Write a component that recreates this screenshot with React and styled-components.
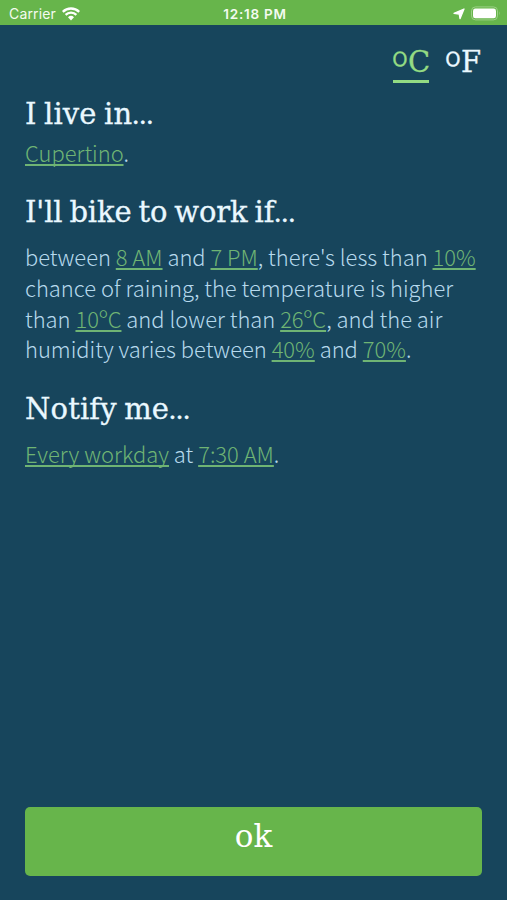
import React from "react";
import styled, { createGlobalStyle } from "styled-components";

const GlobalStyle = createGlobalStyle`
  * {
    box-sizing: border-box;
  }
  body {
    margin: 0;
    background: #17455c;
  }
`;

const Screen = styled.div`
  display: flex;
  flex-direction: column;
  width: 507px;
  height: 900px;
  background: #17455c;
  overflow: hidden;
`;

const StatusBar = styled.header`
  display: grid;
  grid-template-columns: 1fr auto 1fr;
  align-items: center;
  height: 25px;
  padding: 2px 6px 0 9px;
  background: #67b54b;
  color: #f4fbf0;
  font: 400 14px/20px Inter, sans-serif;
  letter-spacing: 0.15px;
`;

const StatusGroup = styled.div`
  display: flex;
  align-items: center;
  justify-content: ${(props) => (props.$end ? "flex-end" : "flex-start")};
  gap: 6px;
`;

const Clock = styled.span`
  font-weight: 600;
  font-size: 13.5px;
  letter-spacing: 0.75px;
`;

const Units = styled.nav`
  display: flex;
  justify-content: flex-end;
  gap: 17px;
  height: 58px;
  padding: 19px 25px 0 0;
`;

const Unit = styled.button`
  display: flex;
  width: 36px;
  height: 39px;
  padding: 0;
  border: 0;
  border-bottom: 3px solid ${(props) => (props.$active ? "#93db83" : "transparent")};
  background: none;
  color: ${(props) => (props.$active ? "#93db83" : "#eaf8ff")};
  font: 29px/36px "DejaVu Serif", serif;
  -webkit-text-stroke: 0.3px currentColor;
  white-space: nowrap;
`;

const Degree = styled.span`
  width: 16px;
  margin-left: -1px;
  font: 300 40px/46px "Noto Sans CJK JP", sans-serif;
`;

const Settings = styled.main`
  flex: 1;
  padding: 13px 0 0 25px;
`;

const Section = styled.section`
  height: ${(props) => props.$height}px;
`;

const Title = styled.h2`
  height: 36px;
  margin: 0 0 ${(props) => props.$gap}px;
  color: #eaf8ff;
  font: 400 29px/36px "DejaVu Serif", serif;
  letter-spacing: ${(props) => props.$spacing || 0}px;
  word-spacing: -2px;
  -webkit-text-stroke: 0.3px currentColor;
  white-space: nowrap;
`;

const Dots = styled.span`
  font: 700 21px/30px "Liberation Serif", serif;
  letter-spacing: 0;
`;

const Text = styled.p`
  margin: 0;
  color: #b6d9ed;
  font: 300 21.94px/30.8px "Noto Sans CJK JP", sans-serif;
  white-space: nowrap;
`;

const Line = styled.span`
  display: block;
`;

const Value = styled.a`
  color: #6fb474;
  text-decoration: underline;
  text-decoration-thickness: 2px;
  text-underline-offset: 2px;
  text-decoration-skip-ink: none;
`;

const OkButton = styled.button`
  height: 69px;
  margin: 0 25px 24px;
  padding: 0 0 11px;
  border: 0;
  border-radius: 5px;
  background: #67b54b;
  color: #fff;
  font: 31px/36px "DejaVu Serif", serif;
`;

const WifiIcon = () => (
  <svg width="18" height="14" viewBox="0 0 18 14" fill="none" stroke="#fff" strokeWidth="2.3">
    <path d="M.8 4.9a11.6 11.6 0 0 1 16.4 0M3.6 7.9a7.7 7.7 0 0 1 10.8 0" />
    <path d="M6 10.2a4.3 4.3 0 0 1 6 0L9 13.4Z" fill="#fff" stroke="none" />
  </svg>
);

const LocationIcon = () => (
  <svg width="12" height="12" viewBox="0 0 12 12">
    <path d="M11 1 7 10.7 6.2 6 1 5.3Z" fill="#fff" stroke="#fff" strokeWidth="1.3" strokeLinejoin="round" />
  </svg>
);

const BatteryIcon = () => (
  <svg width="30" height="15" viewBox="0 0 30 15">
    <rect x=".5" y=".9" width="26" height="13" rx="4" fill="none" stroke="#9bd086" />
    <rect x="2" y="2.5" width="23" height="9.8" rx="2.4" fill="#fff" />
    <path d="M28 5.3q1.5 2.1 0 4.2Z" fill="#9bd086" />
  </svg>
);

const App = () => {
  return (
    <Screen>
      <GlobalStyle />
      <StatusBar>
        <StatusGroup>
          <span>Carrier</span>
          <WifiIcon />
        </StatusGroup>
        <Clock>12:18 PM</Clock>
        <StatusGroup $end>
          <LocationIcon />
          <BatteryIcon />
        </StatusGroup>
      </StatusBar>
      <Units>
        <Unit $active>
          <Degree>º</Degree>C
        </Unit>
        <Unit>
          <Degree>º</Degree>F
        </Unit>
      </Units>
      <Settings>
        <Section $height={98}>
          <Title $gap={6} $spacing={0.15}>
            I live in<Dots>…</Dots>
          </Title>
          <Text>
            <Value>Cupertino</Value>.
          </Text>
        </Section>
        <Section $height={197}>
          <Title $gap={12} $spacing={-0.15}>
            I'll bike to work if<Dots>…</Dots>
          </Title>
          <Text>
            <Line>
              between <Value>8 AM</Value> and <Value>7 PM</Value>, there's less than <Value>10%</Value>
            </Line>
            <Line>chance of raining, the temperature is higher</Line>
            <Line>
              than <Value>10ºC</Value> and lower than <Value>26ºC</Value>, and the air
            </Line>
            <Line>
              humidity varies between <Value>40%</Value> and <Value>70%</Value>.
            </Line>
          </Text>
        </Section>
        <Section $height={100}>
          <Title $gap={12} $spacing={0.15}>
            Notify me<Dots>…</Dots>
          </Title>
          <Text>
            <Value>Every workday</Value> at <Value>7:30 AM</Value>.
          </Text>
        </Section>
      </Settings>
      <OkButton>ok</OkButton>
    </Screen>
  );
};

export default App;
